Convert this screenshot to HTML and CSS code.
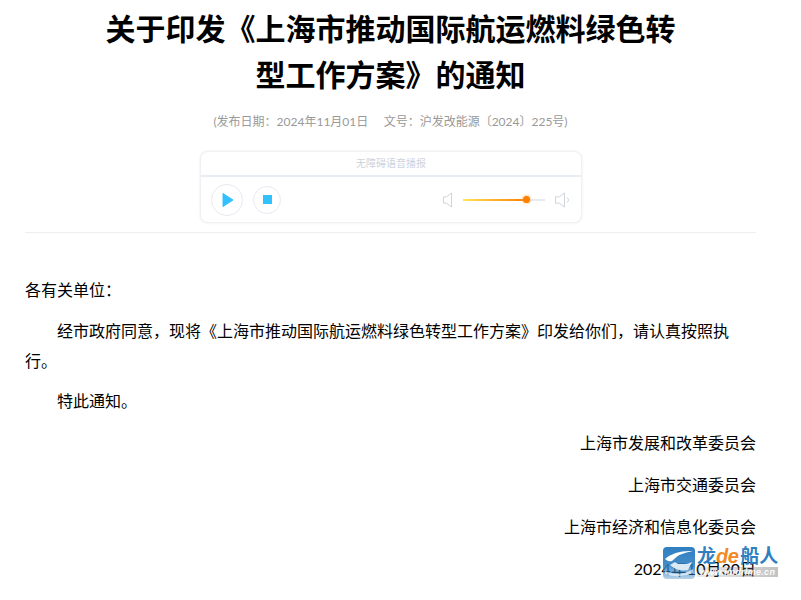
FILE: index.html
```html
<!DOCTYPE html>
<html lang="zh-CN">
<head>
<meta charset="utf-8">
<title>关于印发《上海市推动国际航运燃料绿色转型工作方案》的通知</title>
<link rel="stylesheet" href="styles.css">
</head>
<body>
<main class="article">
  <header class="head">
    <h1 class="title">关于印发《上海市推动国际航运燃料绿色转型工作方案》的通知</h1>
    <p class="meta">(发布日期：2024年11月01日&nbsp;&nbsp;&nbsp;&nbsp;&nbsp;文号：沪发改能源〔2024〕225号)</p>
    <section class="player">
      <div class="player-title">无障碍语音播报</div>
      <div class="player-progress"></div>
      <div class="player-controls">
        <button class="btn btn-play" aria-label="播放"><svg class="play-icon" width="12" height="14" viewBox="0 0 12 14"><path d="M1 0.5 L11 7 L1 13.5 Z" fill="#33c0ff" stroke="#33c0ff" stroke-linejoin="round"/></svg></button>
        <button class="btn btn-stop" aria-label="停止"><span class="stop-square"></span></button>
        <div class="volume">
          <svg width="10" height="16" viewBox="0 0 10 16"><path d="M9.5 1 V15 L4.5 11.2 H1.5 V4.8 H4.5 Z" fill="none" stroke="#cfd3da" stroke-width="1"/></svg>
          <div class="slider"><div class="slider-fill"><span class="slider-knob"></span></div></div>
          <svg width="16" height="16" viewBox="0 0 16 16"><path d="M9.5 1 V15 L4.5 11.2 H0.5 V4.8 H4.5 Z" fill="none" stroke="#cfd3da" stroke-width="1"/><path d="M12.5 5.5 Q14.5 8 12.5 10.5" fill="none" stroke="#cfd3da" stroke-width="1"/></svg>
        </div>
      </div>
    </section>
  </header>
  <div class="body">
    <p class="para-lead">各有关单位：</p>
    <p class="indent para-tight">经市政府同意，现将《上海市推动国际航运燃料绿色转型工作方案》印发给你们，请认真按照执行。</p>
    <p class="indent">特此通知。</p>
    <p class="right">上海市发展和改革委员会</p>
    <p class="right">上海市交通委员会</p>
    <p class="right">上海市经济和信息化委员会</p>
    <p class="right">2024年10月30日</p>
  </div>
</main>
<aside class="watermark">
  <svg class="wm-icon" width="32" height="32" viewBox="0 0 32 32"><defs><linearGradient id="wmFade" x1="0" y1="0" x2="0" y2="1"><stop offset="0" stop-color="#2f7fc1"/><stop offset=".55" stop-color="#2f7fc1" stop-opacity=".9"/><stop offset="1" stop-color="#2f7fc1" stop-opacity=".35"/></linearGradient></defs><rect width="32" height="32" rx="4" fill="url(#wmFade)"/><path d="M2 12 Q12 3 30 4 Q16 6 9 14 Q5 15 2 12 Z" fill="#fff"/><path d="M7 18 L12 15 L15 17 L24 17 L29 15 L25 23 Q14 25 7 18 Z" fill="#dbe9f5"/><path d="M2 24 Q16 31 30 22 V26 Q16 32 2 27 Z" fill="#fff" fill-opacity=".6"/></svg>
  <div class="wm-right">
    <div class="wm-name">龙<i class="wm-de">de</i><span class="wm-boat">船人</span></div>
    <div class="wm-url">www.lmdrlme.cn</div>
  </div>
</aside>
</body>
</html>
```
FILE: styles.css
```css
* { box-sizing: border-box; }
html, body { margin: 0; padding: 0; height: 600px; overflow: hidden; background: #fff; }
body { font-family: Lato, "Noto Sans CJK SC", sans-serif; color: #000; position: relative; }
.article { padding: 5px 45px 0 25px; width: 801px; }
.head { border-bottom: 1px solid #eee; height: 228px; }
.title { margin: 0 auto; width: 580px; text-align: center; font-size: 30px; line-height: 46px; font-weight: 700; }
.meta { margin: 15px 0 0; text-align: center; font-size: 12px; line-height: 20px; color: #999; }
.player { width: 382px; height: 72px; margin: 19px 0 0 175px; border-radius: 8px; background: #fff; border: 1px solid #f0f1f4; box-shadow: 0 0 3px rgba(0,0,0,.08); }
.player-title { height: 23px; text-align: center; font-size: 10px; line-height: 23px; color: #ced2de; }
.player-progress { height: 2px; background: #e8edf3; }
.player-controls { display: flex; align-items: center; height: 45px; padding: 0 10px; }
.btn { display: flex; align-items: center; justify-content: center; padding: 0; border: 1px solid #e8e9f1; border-radius: 50%; background: #fff; }
.btn-play { width: 32px; height: 32px; }
.play-icon { margin-left: 1px; }
.btn-stop { width: 28px; height: 28px; margin-left: 10px; }
.stop-square { width: 9px; height: 9px; background: #33c0ff; }
.volume { margin-left: auto; display: flex; align-items: center; }
.slider { width: 82px; height: 2px; margin: 0 10px 0 11px; background: #e8e9f1; }
.slider-fill { position: relative; width: 63px; height: 2px; background: linear-gradient(90deg, #ffe45c, #ff7f00); }
.slider-knob { position: absolute; right: -3.5px; top: -2.5px; width: 7px; height: 7px; border-radius: 50%; background: #ff7f00; box-shadow: 0 0 3px #ffa040; }
.body { margin-top: 42px; font-size: 16px; line-height: 30px; }
.body p { margin: 0 0 12px; }
.body .para-lead { margin-bottom: 11px; }
.body .para-tight { margin-bottom: 10px; }
.indent { text-indent: 32px; }
.right { text-align: right; }
.watermark { position: absolute; left: 663px; top: 547px; display: flex; align-items: flex-start; }
.wm-icon { display: block; }
.wm-right { margin-left: 2px; margin-top: -2px; }
.wm-name { font-size: 19px; line-height: 22px; font-weight: 700; color: #2f7fc1; white-space: nowrap; }
.wm-de { font-family: "Liberation Sans", sans-serif; font-size: 20px; letter-spacing: -.5px; color: #f08a24; }
.wm-boat { margin-left: 2px; }
.wm-url { width: 81px; height: 10px; background: linear-gradient(90deg, rgba(120,120,120,.15), rgba(120,120,120,.45)); color: rgba(255,255,255,.95); font-family: "Liberation Sans", sans-serif; font-size: 9px; font-weight: 700; line-height: 10px; font-style: italic; letter-spacing: .3px; text-align: center; }
```
